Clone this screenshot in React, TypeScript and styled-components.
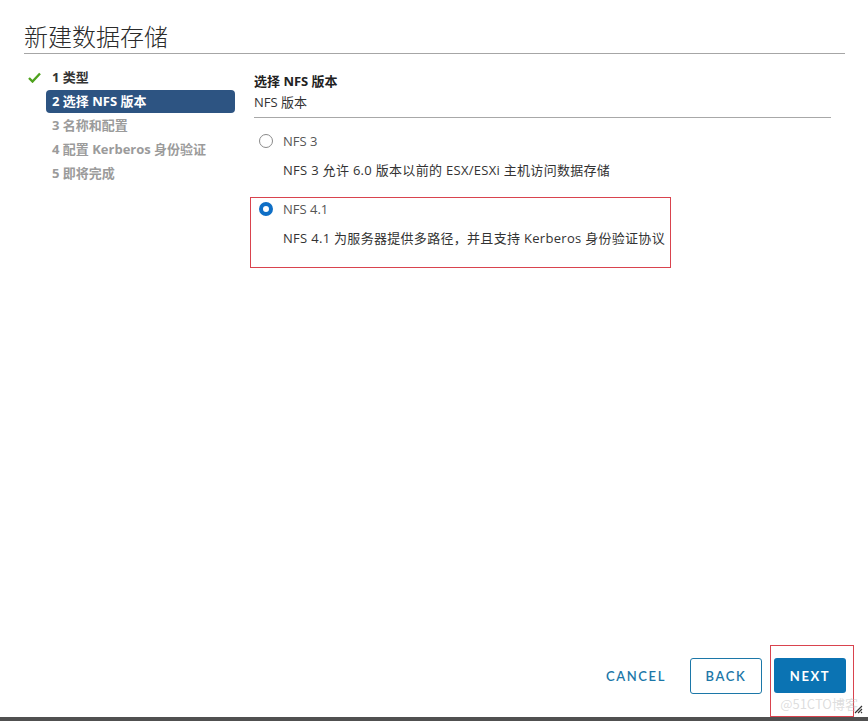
import React from 'react';
import styled, { createGlobalStyle } from 'styled-components';

const GlobalStyle = createGlobalStyle`
  html, body {
    margin: 0;
    padding: 0;
    background: #ffffff;
  }
  body {
    font-family: "Open Sans", "Noto Sans CJK SC", sans-serif;
    color: #333333;
  }
`;

const Page = styled.div`
  position: relative;
  width: 868px;
  height: 721px;
  display: flex;
  flex-direction: column;
  background: #ffffff;
  overflow: hidden;
`;

const Header = styled.div`
  padding: 20px 23px 0 24px;
`;

const Title = styled.h1`
  margin: 0;
  height: 33px;
  font-family: "Noto Sans CJK SC", sans-serif;
  font-size: 24px;
  font-weight: 300;
  line-height: 31px;
  color: #2b2b2b;
  border-bottom: 1px solid #a6a6a6;
`;

const Body = styled.div`
  flex: 1;
  display: flex;
  padding-top: 65px;
  margin-top: -54px;
`;

const Sidebar = styled.ul`
  list-style: none;
  margin: 0;
  padding: 0 0 0 28px;
  width: 207px;
`;

const StepRow = styled.li`
  display: flex;
  align-items: center;
  height: 24px;
`;

const IconSlot = styled.span`
  width: 18px;
  display: flex;
  align-items: center;
  justify-content: flex-start;
`;

const StepLabel = styled.span<{ state: 'done' | 'active' | 'todo' }>`
  flex: 1;
  height: 23px;
  padding: 0 6px;
  display: flex;
  align-items: center;
  border-radius: 4px;
  font-size: 13px;
  font-weight: 700;
  line-height: 1;
  white-space: nowrap;
  background: ${({ state }) => (state === 'active' ? '#2d5482' : 'transparent')};
  color: ${({ state }) => (state === 'active' ? '#ffffff' : state === 'done' ? '#333333' : '#9b9b9b')};
`;

const Content = styled.div`
  margin-left: 19px;
  width: 577px;
  display: flex;
  flex-direction: column;
`;

const SectionHead = styled.div`
  border-bottom: 1px solid #a8a8a8;
  padding-bottom: 5px;
  margin-top: 5px;
`;

const SectionTitle = styled.div`
  height: 22px;
  line-height: 22px;
  font-size: 13px;
  font-weight: 700;
  color: #222222;
`;

const SectionSub = styled.div`
  height: 20px;
  line-height: 20px;
  font-size: 13px;
  color: #333333;
`;

const Options = styled.div`
  margin-left: -4px;
  margin-top: 11px;
  display: flex;
  flex-direction: column;
`;

const Option = styled.label<{ marked?: boolean }>`
  box-sizing: border-box;
  width: 421px;
  height: ${({ marked }) => (marked ? '71px' : '68px')};
  padding: 0 0 0 8px;
  border: 1px solid ${({ marked }) => (marked ? '#d9434e' : 'transparent')};
  display: flex;
  flex-direction: column;
  cursor: pointer;
`;

const RadioRow = styled.div`
  height: 22px;
  display: flex;
  align-items: center;
  gap: 10px;
  font-size: 13px;
  color: #565656;
`;

const Radio = styled.span<{ checked?: boolean }>`
  box-sizing: border-box;
  width: 14px;
  height: 14px;
  border-radius: 50%;
  border: ${({ checked }) => (checked ? '4px solid #0f6fc6' : '1.5px solid #8a8a8a')};
  background: #ffffff;
  box-shadow: ${({ checked }) => (checked ? 'inset 0 0 0 1px #ffffff' : 'none')};
`;

const Description = styled.div`
  margin-top: 7px;
  padding-left: 24px;
  height: 22px;
  line-height: 22px;
  font-size: 13px;
  letter-spacing: 0.3px;
  color: #333333;
  white-space: nowrap;
`;

const Footer = styled.div`
  display: flex;
  justify-content: flex-end;
  align-items: flex-start;
  padding-right: 14px;
  height: 72px;
`;

const FlatButton = styled.button`
  margin-top: 13px;
  height: 36px;
  width: 80px;
  border: none;
  background: transparent;
  font-family: Lato, sans-serif;
  font-size: 13px;
  font-weight: 600;
  letter-spacing: 1.6px;
  color: #1c77a8;
  cursor: pointer;
`;

const OutlineButton = styled.button`
  margin: 13px 0 0 14px;
  height: 36px;
  width: 72px;
  box-sizing: border-box;
  border: 1px solid #1c77a8;
  border-radius: 3px;
  background: #ffffff;
  font-family: Lato, sans-serif;
  font-size: 13px;
  font-weight: 600;
  letter-spacing: 1.6px;
  color: #1c77a8;
  cursor: pointer;
`;

const Marked = styled.div`
  margin-left: 8px;
  padding: 12px 7px 23px 3px;
  border: 1px solid #d9434e;
`;

const PrimaryButton = styled.button`
  display: block;
  height: 35px;
  width: 72px;
  border: none;
  border-radius: 3px;
  background: #0b73b3;
  font-family: Lato, sans-serif;
  font-size: 13px;
  font-weight: 700;
  letter-spacing: 1.6px;
  color: #ffffff;
  cursor: pointer;
`;

const BottomBand = styled.div`
  height: 4px;
  background: #505050;
`;

const Watermark = styled.span`
  position: absolute;
  right: 10px;
  bottom: 8px;
  font-family: "Noto Sans CJK SC", sans-serif;
  font-size: 13px;
  color: rgba(180, 180, 180, 0.45);
  pointer-events: none;
`;

const Grip = styled.svg`
  position: absolute;
  right: 5px;
  bottom: 7px;
`;

const CheckIcon = () => (
  <svg width="13" height="11" viewBox="0 0 13 11">
    <path d="M1 6 L4.5 9.5 L12 1.5" fill="none" stroke="#4ea21d" strokeWidth="2.4" />
  </svg>
);

const steps: { label: string; state: 'done' | 'active' | 'todo' }[] = [
  { label: '1 类型', state: 'done' },
  { label: '2 选择 NFS 版本', state: 'active' },
  { label: '3 名称和配置', state: 'todo' },
  { label: '4 配置 Kerberos 身份验证', state: 'todo' },
  { label: '5 即将完成', state: 'todo' },
];

const App = () => {
  return (
    <Page>
      <GlobalStyle />
      <Header>
        <Title>新建数据存储</Title>
      </Header>
      <Body>
        <Sidebar>
          {steps.map((step) => (
            <StepRow key={step.label}>
              <IconSlot>{step.state === 'done' && <CheckIcon />}</IconSlot>
              <StepLabel state={step.state}>{step.label}</StepLabel>
            </StepRow>
          ))}
        </Sidebar>
        <Content>
          <SectionHead>
            <SectionTitle>选择 NFS 版本</SectionTitle>
            <SectionSub>NFS 版本</SectionSub>
          </SectionHead>
          <Options>
            <Option>
              <RadioRow>
                <Radio />
                NFS 3
              </RadioRow>
              <Description>NFS 3 允许 6.0 版本以前的 ESX/ESXi 主机访问数据存储</Description>
            </Option>
            <Option marked>
              <RadioRow>
                <Radio checked />
                NFS 4.1
              </RadioRow>
              <Description>NFS 4.1 为服务器提供多路径，并且支持 Kerberos 身份验证协议</Description>
            </Option>
          </Options>
        </Content>
      </Body>
      <Footer>
        <FlatButton>CANCEL</FlatButton>
        <OutlineButton>BACK</OutlineButton>
        <Marked>
          <PrimaryButton>NEXT</PrimaryButton>
        </Marked>
      </Footer>
      <BottomBand />
      <Watermark>@51CTO博客</Watermark>
      <Grip width="10" height="10" viewBox="0 0 10 10">
        <path d="M9 2 L2 9 M9 5 L5 9 M9 8 L8 9" stroke="#333" strokeWidth="1.2" />
      </Grip>
    </Page>
  );
};

export default App;
